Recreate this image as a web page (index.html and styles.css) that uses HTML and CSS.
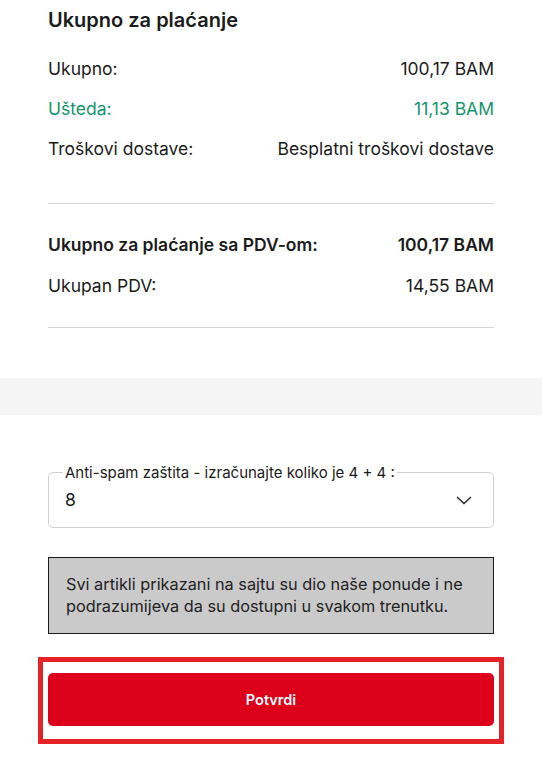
FILE: index.html
```html
<!DOCTYPE html>
<html lang="bs">
<head>
<meta charset="utf-8">
<title>Ukupno za plaćanje</title>
<link rel="stylesheet" href="styles.css">
</head>
<body>
<section class="summary">
  <h2 class="summary-title">Ukupno za plaćanje</h2>
  <div class="row"><span>Ukupno:</span><span>100,17 BAM</span></div>
  <div class="row row-green"><span>Ušteda:</span><span>11,13 BAM</span></div>
  <div class="row"><span>Troškovi dostave:</span><span>Besplatni troškovi dostave</span></div>
  <hr class="divider divider-first">
  <div class="row row-bold row-first"><span>Ukupno za plaćanje sa PDV-om:</span><span>100,17 BAM</span></div>
  <div class="row"><span>Ukupan PDV:</span><span>14,55 BAM</span></div>
  <hr class="divider divider-last">
</section>
<div class="band"></div>
<section class="form">
  <fieldset class="field">
    <legend class="field-label">Anti-spam zaštita - izračunajte koliko je 4 + 4 :</legend>
    <div class="select">
      <span class="select-value">8</span>
      <svg class="chevron" width="16" height="9" viewBox="0 0 16 9" aria-hidden="true"><path d="M1 1 L8 7.5 L15 1" fill="none" stroke="#222" stroke-width="1.4"/></svg>
    </div>
  </fieldset>
  <div class="notice">Svi artikli prikazani na sajtu su dio naše ponude i ne podrazumijeva da su dostupni u svakom trenutku.</div>
  <div class="submit-wrap">
    <button class="submit" type="button">Potvrdi</button>
  </div>
</section>
</body>
</html>
```
FILE: styles.css
```css
* { box-sizing: border-box; }
html, body { margin: 0; padding: 0; background: #fff; }
body {
  font-family: Inter, "Noto Sans", "Liberation Sans", sans-serif;
  color: #1b1b1b;
  font-size: 17.5px;
}
.summary { padding: 8px 48px 0; }
.summary-title {
  margin: 0 0 25px;
  font-size: 20px;
  line-height: 24px;
  font-weight: 600;
}
.row {
  display: flex;
  justify-content: space-between;
  line-height: 24px;
  margin-bottom: 16px;
}
.row-green { color: #12966a; }
.row-bold { font-weight: 600; }
.row-first { margin-top: 29px; margin-bottom: 17px; }
.divider {
  border: 0;
  border-top: 1px solid #d6d6d6;
  margin: 0;
}
.divider-first { margin-top: 42px; }
.divider-last { margin-top: 29px; }
.band {
  margin-top: 50px;
  height: 37px;
  background: #f5f5f5;
}
.form { padding: 0 38px; }
.field {
  margin: 49px 10px 0;
  padding: 0 16px 15px;
  border: 1px solid #d0d0d0;
  border-radius: 5px;
  min-width: 0;
}
.field-label {
  padding: 0 2px;
  margin-left: -2px;
  font-size: 15px;
  line-height: 17px;
  color: #1b1b1b;
}
.select {
  margin-top: 7px;
  display: flex;
  align-items: center;
  justify-content: space-between;
  height: 24px;
}
.select-value { font-size: 17.5px; line-height: 24px; }
.chevron { margin-right: 5px; display: block; }
.notice {
  margin: 29px 10px 0;
  background: #cacaca;
  border: 1px solid #1b1b1b;
  padding: 15px 17px 16px;
  font-size: 16.3px;
  line-height: 22px;
  color: #222;
}
.submit-wrap {
  margin-top: 23px;
  border: 5px solid #e52225;
  padding: 11px 5px 13px;
}
.submit {
  display: block;
  width: 100%;
  height: 53px;
  border: 0;
  border-radius: 5px;
  background: #dc001a;
  color: #fff;
  font-family: inherit;
  font-size: 14.5px;
  font-weight: 600;
}
```
